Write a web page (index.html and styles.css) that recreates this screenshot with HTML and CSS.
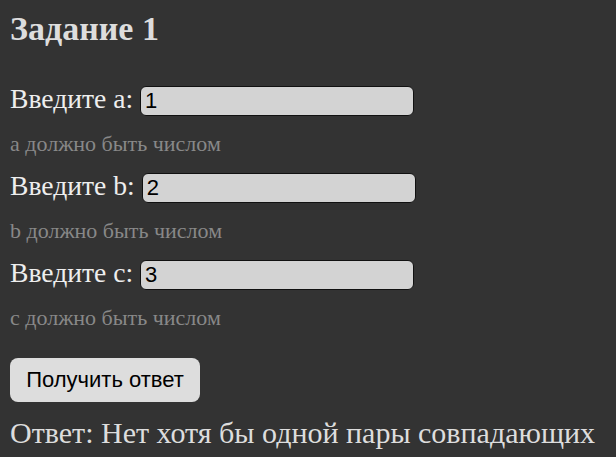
FILE: index.html
```html
<!DOCTYPE html>
<html lang="ru">
<head>
<meta charset="utf-8">
<link rel="stylesheet" href="styles.css">
</head>
<body>
<h2 class="title">Задание 1</h2>
<div class="form">
  <div class="field">
    <label class="label"><span class="label-text">Введите a:</span><input class="input" type="text" value="1"></label>
    <div class="hint">a должно быть числом</div>
  </div>
  <div class="field">
    <label class="label"><span class="label-text">Введите b:</span><input class="input" type="text" value="2"></label>
    <div class="hint">b должно быть числом</div>
  </div>
  <div class="field">
    <label class="label"><span class="label-text">Введите c:</span><input class="input" type="text" value="3"></label>
    <div class="hint">c должно быть числом</div>
  </div>
</div>
<button class="btn" type="button">Получить ответ</button>
<div class="answer">Ответ: Нет хотя бы одной пары совпадающих</div>
</body>
</html>
```
FILE: styles.css
```css
html, body {
  background: #333333;
}
body {
  margin: 0;
  padding: 9px 10px 0;
  font-family: "Liberation Serif", "Times New Roman", serif;
  color: #eeeeee;
}
.title {
  margin: 0 0 35px;
  font-size: 34px;
  font-weight: bold;
  color: #dddddd;
  line-height: 40px;
}
.form {
  display: flex;
  flex-direction: column;
}
.field {
  display: flex;
  flex-direction: column;
}
.label {
  font-size: 27.6px;
  line-height: 30px;
  display: flex;
  align-items: baseline;
  gap: 7px;
}
.input {
  width: 274px;
  height: 30px;
  box-sizing: border-box;
  background: #d3d3d3;
  border: 1px solid #111;
  border-radius: 6px;
  font-family: "Liberation Sans", Arial, sans-serif;
  font-size: 22px;
  padding: 0 4px;
  color: #000;
}
.hint {
  font-size: 22px;
  color: #888888;
  line-height: 26px;
  margin: 15px 0 14px;
}
.btn {
  margin-top: 13px;
  width: 190px;
  height: 44px;
  background: #dddddd;
  border: none;
  border-radius: 8px;
  font-family: "Liberation Sans", Arial, sans-serif;
  font-size: 22px;
  color: #000;
  padding: 0;
}
.answer {
  margin-top: 13.6px;
  font-size: 30px;
  line-height: 34px;
  color: #dddddd;
  white-space: nowrap;
}
```
